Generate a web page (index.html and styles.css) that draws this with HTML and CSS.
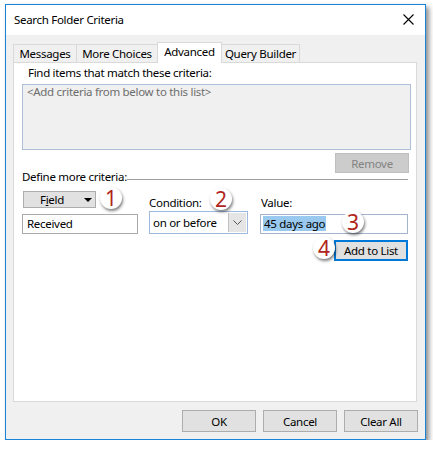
FILE: index.html
```html
<!DOCTYPE html>
<html>
<head>
<meta charset="utf-8">
<link rel="stylesheet" href="styles.css">
</head>
<body>
<div class="dialog">
  <div class="titlebar">
    <span class="title">Search Folder Criteria</span>
    <svg class="close" width="11" height="11" viewBox="0 0 11 11"><path d="M0.5 0.5 L10.5 10.5 M10.5 0.5 L0.5 10.5" stroke="#000" stroke-width="1.1" fill="none"/></svg>
  </div>
  <div class="body">
    <div class="tabs">
      <div class="tab t-messages">Messages</div>
      <div class="tab t-more">More Choices</div>
      <div class="tab t-adv active">Advanced</div>
      <div class="tab t-query">Query Builder</div>
    </div>
    <div class="panel">
      <div class="find-label">Find items that match these criteria:</div>
      <div class="listbox">&lt;Add criteria from below to this list&gt;</div>
      <div class="remove-row"><div class="btn disabled remove">Remove</div></div>
      <div class="define"><span class="define-text">Define more criteria:</span><span class="rule"></span></div>
      <div class="criteria">
        <div class="btn field c1"><span>F<u>i</u>eld</span><span class="tri"></span></div>
        <div class="lbl c3">Condition:</div>
        <div class="lbl c5 val-lbl">Value:</div>
        <div class="input c1 r2">Received</div>
        <div class="select c3 r2"><span class="sel-text">on or before</span><span class="sel-btn"><svg width="9" height="6" viewBox="0 0 9 6"><path d="M0.5 0.5 L4.5 4.5 L8.5 0.5" stroke="#555" stroke-width="1" fill="none"/></svg></span></div>
        <div class="input c5 r2 value"><span class="selected">45 days ago</span></div>
        <div class="btn add c5 r3">Add to List</div>
      </div>
      <div class="callout n1">1</div>
      <div class="callout n2">2</div>
      <div class="callout n3">3</div>
      <div class="callout n4">4</div>
    </div>
    <div class="footer">
      <div class="btn foot">OK</div>
      <div class="btn foot">Cancel</div>
      <div class="btn foot">Clear All</div>
    </div>
  </div>
</div>
</body>
</html>
```
FILE: styles.css
```css
html, body {
  margin: 0;
  padding: 0;
  background: #ffffff;
}
body {
  font-family: "Noto Sans", "Open Sans", sans-serif;
  font-size: 11.5px;
  letter-spacing: -0.3px;
  color: #000;
}
.dialog {
  position: relative;
  margin: 4px 0 0 5px;
  width: 419px;
  height: 434px;
  border: 1px solid #1883d7;
  box-shadow: 3px 3px 5px rgba(0, 0, 0, 0.45);
  display: flex;
  flex-direction: column;
  background: #f0f0f0;
}
.titlebar {
  height: 30px;
  background: #ffffff;
  display: flex;
  align-items: center;
  justify-content: space-between;
  padding: 0 11px 0 8px;
  flex: none;
}
.title {
  line-height: 30px;
  white-space: nowrap;
}
.close {
  display: block;
  margin-top: -1px;
}
.body {
  flex: 1;
  display: flex;
  flex-direction: column;
  padding: 7px 0 0 0;
}
.tabs {
  display: flex;
  align-items: flex-end;
  height: 20px;
  margin-left: 7px;
  position: relative;
  z-index: 2;
}
.tab {
  box-sizing: border-box;
  height: 18px;
  border: 1px solid #d9d9d9;
  border-bottom: none;
  border-right: none;
  background: #f0f0f0;
  text-align: center;
  line-height: 18px;
  white-space: nowrap;
}
.t-messages { width: 63px; }
.t-more { width: 81px; }
.t-adv { width: 65px; }
.t-query { width: 79px; border-right: 1px solid #d9d9d9; margin-left: -1px; }
.tab.active {
  height: 21px;
  margin-bottom: -1px;
  background: #ffffff;
  border-right: 1px solid #d9d9d9;
  line-height: 18px;
}
.panel {
  position: relative;
  box-sizing: border-box;
  margin: 0 8px 0 7px;
  height: 340px;
  background: #ffffff;
  border: 1px solid #d9d9d9;
  padding: 2px 5px 0 8px;
  flex: none;
}
.find-label {
  line-height: 16px;
  padding-left: 6px;
  white-space: nowrap;
}
.listbox {
  box-sizing: border-box;
  margin-top: 3px;
  height: 66px;
  background: #f0f0f0;
  border: 1px solid #adbfd9;
  color: #6d6d6d;
  line-height: 14px;
  padding: 0 4px;
  white-space: nowrap;
}
.remove-row {
  display: flex;
  justify-content: flex-end;
  margin-top: 3px;
  padding-right: 2px;
}
.btn {
  box-sizing: border-box;
  background: #e1e1e1;
  border: 1px solid #adadad;
  display: flex;
  align-items: center;
  justify-content: center;
  white-space: nowrap;
}
.btn.disabled {
  background: #cccccc;
  border-color: #bfbfbf;
  color: #838383;
}
.remove {
  width: 74px;
  height: 20px;
}
.define {
  display: flex;
  margin-top: 0;
  height: 8px;
  line-height: 8px;
  white-space: nowrap;
}
.rule {
  flex: 1;
  margin: 6px 3px 0 0;
  border-top: 1px solid #a0a0a0;
  height: 0;
}
.criteria {
  display: grid;
  grid-template-columns: 116px 11px 99px 12px 148px;
  grid-template-rows: 17px 20px 20px;
  row-gap: 6px;
  margin-top: 10px;
}
.c1 { grid-column: 1; }
.c3 { grid-column: 3; }
.c5 { grid-column: 5; }
.r2 { grid-row: 2; }
.r3 { grid-row: 3; }
.field {
  width: 73px;
  height: 17px;
  margin-left: 1px;
  justify-content: space-between;
  padding: 0 3px 0 16px;
}
.tri {
  width: 0;
  height: 0;
  border-left: 4px solid transparent;
  border-right: 4px solid transparent;
  border-top: 4px solid #000;
}
.lbl {
  align-self: end;
  line-height: 13px;
  margin-bottom: -1px;
  white-space: nowrap;
}
.val-lbl { padding-left: 1px; }
.input {
  box-sizing: border-box;
  height: 20px;
  border: 1px solid #a9a9a9;
  background: #fff;
  line-height: 18px;
  padding-left: 4px;
  white-space: nowrap;
}
.value {
  border-color: #a3b4cc;
  padding-left: 2px;
  padding-top: 1px;
  line-height: 15px;
}
.selected {
  background: #99c9ef;
  display: inline-block;
  padding: 0 1px;
}
.select {
  box-sizing: border-box;
  height: 23px;
  align-self: center;
  border: 1px solid #9fb9dc;
  background: #fff;
  display: flex;
  align-items: stretch;
  margin-top: -3px;
}
.sel-text {
  flex: 1;
  line-height: 21px;
  padding-left: 3px;
  white-space: nowrap;
}
.sel-btn {
  width: 17px;
  margin: 1px;
  background: #e5e5e5;
  border-left: 1px solid #c0c0c0;
  display: flex;
  align-items: center;
  justify-content: center;
}
.add {
  justify-self: end;
  width: 74px;
  height: 21px;
  border: 2px solid #0078d7;
}
.callout {
  position: absolute;
  width: 22px;
  height: 22px;
  border-radius: 50%;
  background: #ffffff;
  box-shadow: 1px 2px 3px rgba(0, 0, 0, 0.5);
  color: #b0251b;
  font-size: 21px;
  letter-spacing: 0;
  line-height: 22px;
  text-align: center;
}
.n1 { left: 86px; top: 124px; }
.n2 { left: 196px; top: 125px; }
.n3 { left: 328px; top: 148px; }
.n4 { left: 299px; top: 174px; }
.footer {
  display: flex;
  justify-content: flex-end;
  gap: 7px;
  margin-top: 8px;
  padding-right: 7px;
}
.foot {
  width: 74px;
  height: 22px;
}
```
